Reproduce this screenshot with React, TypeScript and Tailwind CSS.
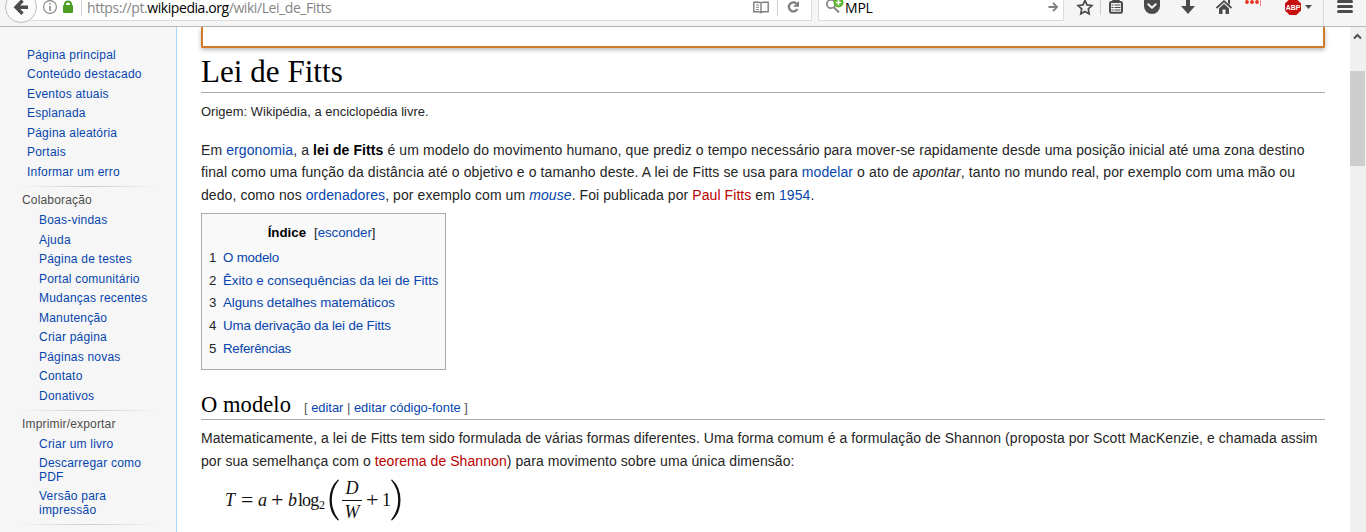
import type { ReactNode } from "react";

const ARIAL = "font-['Liberation_Sans',Arial,sans-serif]";
const SERIF = "font-['Liberation_Serif',Georgia,serif]";
const UI = "font-['Open_Sans','Segoe_UI',sans-serif]";

function A({ children, red }: { children: ReactNode; red?: boolean }) {
  return <a className={red ? "text-[#ba0000]" : "text-[#0645ad]"}>{children}</a>;
}

/** A slice of the toolbar drawing surface: x is its left edge, w its width. */
function Cell({ x, w, children }: { x: number; w: number; children?: ReactNode }) {
  return (
    <svg className="block shrink-0" width={w} height={26} viewBox={`${x} 0 ${w} 26`} fill="none">
      {children}
    </svg>
  );
}

function Toolbar() {
  return (
    <header className="flex h-[27px] w-full shrink-0 overflow-hidden border-b border-[#b9b9b9] bg-[#f5f5f5]">
      <Cell x={0} w={87}>
        <rect x="21" y="-2" width="70" height="22.500" fill="#fff" />
        <path d="M30 20.500H87" stroke="#dcdcdc" />
        <circle cx="21" cy="7" r="15.500" fill="#fbfbfb" stroke="#bcbcbc" />
        <path d="M28 7.200H17M22.500 0.500L16 7.200l6.500 6.500" stroke="#4b4b4b" strokeWidth="3.400" />
        <circle cx="50" cy="7" r="6.400" stroke="#858585" strokeWidth="1.100" />
        <path d="M50 6v5M50 3v1.600" stroke="#858585" strokeWidth="1.600" />
        <path d="M65 6V4.500a3 3 0 0 1 6 0V6" stroke="#4c9e24" strokeWidth="2" />
        <rect x="63" y="5" width="10" height="8" rx="1" fill="#4c9e24" />
        <path d="M81.500 0V16" stroke="#cfcfcf" />
      </Cell>
      <div className={`h-[21px] w-[653px] border-b border-[#dcdcdc] bg-white text-[14px] leading-[16px] whitespace-pre text-[#858585] ${UI}`}>
        <span className="tracking-[-0.43px]">https://pt.<span className="text-black">wikipedia.org</span>/wiki/Lei_de_Fitts</span>
      </div>
      <Cell x={740} w={90}>
        <rect x="740" y="-2" width="71.500" height="22.500" fill="#fff" stroke="none" />
        <path d="M740 20.500H811.500V0" stroke="#dcdcdc" />
        <path d="M818.500 0V20.500H830" fill="#fff" stroke="#dcdcdc" />
        <rect x="819" y="-1" width="11" height="21" fill="#fff" />
        <path d="M753.800 2.200h4.700q2.500 0 2.500 1.600q0-1.600 2.500-1.600h4.700v9.600h-4.700q-2.500 0-2.500 1.500q0-1.500-2.500-1.500h-4.700zM761 4v8" stroke="#7f7f7f" strokeWidth="1.400" />
        <path d="M756 5h3M756 7.300h3M756 9.500h3" stroke="#8a8a8a" />
        <path d="M777.500 0V16" stroke="#cfcfcf" />
        <path d="M797.400 9a4.500 4.500 0 1 1-1-5.400" stroke="#7f7f7f" strokeWidth="2.300" />
        <path d="M799 1v5.800h-6z" fill="#7f7f7f" />
        <circle cx="831" cy="4" r="4.200" stroke="#8a8a8a" strokeWidth="1.800" />
      </Cell>
      <Cell x={830} w={15}>
        <path d="M815 20.500H845" stroke="#dcdcdc" />
        <rect x="830" y="-1" width="15" height="21" fill="#fff" />
        <circle cx="831" cy="4" r="4.200" stroke="#8a8a8a" strokeWidth="1.800" />
        <path d="M833.800 7.200l5.200 5.400" stroke="#8a8a8a" strokeWidth="2.200" />
        <circle cx="838.500" cy="2.500" r="5" fill="#5cb531" />
        <path d="M835.800 2.500h5.400M838.500 0v5.200" stroke="#fff" strokeWidth="1.500" />
      </Cell>
      <div className={`h-[21px] w-[195px] border-b border-[#dcdcdc] bg-white text-[14px] leading-[16px] tracking-[-0.2px] text-black ${UI}`}>MPL</div>
      <Cell x={1040} w={30}>
        <path d="M1040 0V20.500H1063.500V0" fill="#fff" stroke="#dcdcdc" />
        <rect x="1039" y="-1" width="4" height="21" fill="#fff" />
        <path d="M1048.500 7h7M1053 2.800l4 4.200-4 4.200" stroke="#7f7f7f" strokeWidth="1.900" />
      </Cell>
      <Cell x={1070} w={30}>
        <path d="M1085 .4l2 4.500 4.900.6-3.600 3.400.9 4.900-4.200-2.400-4.200 2.400.9-4.900-3.600-3.400 4.900-.6z" stroke="#4b4b4b" strokeWidth="1.700" />
      </Cell>
      <Cell x={1100} w={34}>
        <path d="M1100.500 0V15" stroke="#cfcfcf" />
        <rect x="1110" y="2" width="12" height="10.800" rx="1.200" stroke="#4b4b4b" strokeWidth="2" />
        <path d="M1112 1.500q0-2.500 4-2.500t4 2.500z" fill="#4b4b4b" />
        <path d="M1111.500 5h2M1114.500 5h6M1111.500 7.500h2M1114.500 7.500h6M1111.500 10h2M1114.500 10h6" stroke="#4b4b4b" strokeWidth="1" />
      </Cell>
      <Cell x={1134} w={36}>
        <path d="M1144-1h16v7a8 8 0 0 1-16 0z" fill="#4b4b4b" />
        <path d="M1148.300 4.200l3.700 3.600 3.700-3.600" stroke="#f5f5f5" strokeWidth="2" strokeLinecap="round" strokeLinejoin="round" />
      </Cell>
      <Cell x={1170} w={36}>
        <path d="M1186-1h4v7h5l-7 8-7-8h5z" fill="#4b4b4b" />
      </Cell>
      <Cell x={1206} w={36}>
        <path d="M1216.500 8l7.500-6.800 7.500 6.800" stroke="#4b4b4b" strokeWidth="1.800" />
        <path d="M1228 0h2v5l-2-2zM1219 8.500l5-4.700 5 4.700V14h-3.500V9.500h-3V14h-3.500z" fill="#4b4b4b" />
      </Cell>
      <Cell x={1242} w={36}>
        <g fill="#e8301c">
          <circle cx="1247" cy="2" r="1.900" />
          <circle cx="1252" cy="2" r="1.900" />
          <circle cx="1257" cy="2" r="1.900" />
        </g>
        <path d="M1260.500 0V6" stroke="#e68a80" />
      </Cell>
      <Cell x={1278} w={54}>
        <path d="M1289.600-1h6.800l4.600 4.600v6.800l-4.600 4.600h-6.800l-4.600-4.600V3.600z" fill="#c70d0d" />
        <text x="1285.800" y="9.800" textLength="14.600" lengthAdjust="spacingAndGlyphs" fontFamily="Liberation Sans" fontSize="7.500" fontWeight="700" fill="#fff">ABP</text>
        <path d="M1305 5h7l-3.500 4z" fill="#4b4b4b" />
        <path d="M1323.500 0V26" stroke="#d8d8d8" />
      </Cell>
      <Cell x={1332} w={34}>
        <path d="M1338.500 1.500h13M1338.500 6.500h13M1338.500 11.500h13" stroke="#4b4b4b" strokeWidth="3" strokeLinecap="round" />
      </Cell>
    </header>
  );
}

const MAIN = ["Página principal", "Conteúdo destacado", "Eventos atuais", "Esplanada", "Página aleatória", "Portais", "Informar um erro"];
const COLLAB = ["Boas-vindas", "Ajuda", "Página de testes", "Portal comunitário", "Mudanças recentes", "Manutenção", "Criar página", "Páginas novas", "Contato", "Donativos"];
const PRINT = ["Criar um livro", "Descarregar como PDF", "Versão para impressão"];

function Links({ items, indent }: { items: string[]; indent?: boolean }) {
  return (
    <ul className={indent ? "w-[160px] pl-[39px]" : "pl-[27px]"}>
      {items.map((t) => (
        <li key={t} className="py-[3px] text-[12px] leading-[13.5px] tracking-[0.22px] text-[#0645ad]">{t}</li>
      ))}
    </ul>
  );
}

function Rule() {
  return <div className="ml-[19px] h-px w-[140px] bg-linear-to-r from-transparent via-[#c8ccd1] to-transparent" />;
}

function Heading({ children }: { children: string }) {
  return <h3 className="h-[23.500px] pl-[22px] pt-[5px] text-[12px] leading-[17px] tracking-[0.17px] text-[#4d4d4d]">{children}</h3>;
}

function Sidebar() {
  return (
    <nav className="h-full w-[177px] shrink-0 border-r border-[#a7d7f9] bg-[#f6f6f6] pt-[18.500px]">
      <Links items={MAIN} />
      <div className="h-[4px]" />
      <Rule />
      <Heading>Colaboração</Heading>
      <div className="h-[0.500px]" />
      <Links items={COLLAB} indent />
      <div className="h-[4px]" />
      <Rule />
      <Heading>Imprimir/exportar</Heading>
      <Links items={PRINT} indent />
      <div className="h-[4px]" />
      <Rule />
    </nav>
  );
}

const TOC = [
  { t: "O modelo", cls: "tracking-[-0.2px]" },
  { t: "Êxito e consequências da lei de Fitts", cls: "tracking-[-0.01px]" },
  { t: "Alguns detalhes matemáticos", cls: "tracking-[-0.07px]" },
  { t: "Uma derivação da lei de Fitts", cls: "tracking-[-0.15px]" },
  { t: "Referências", cls: "tracking-[-0.27px]" },
];

function Formula() {
  return (
    <div className={`ml-[23px] mt-[7px] flex h-[42px] items-center text-[18px] leading-[20px] text-[#111] ${SERIF}`}>
      <i className="w-[17px] pl-px">T</i>
      <span className="w-[17px] text-[22px]">=</span>
      <i className="w-[13px]">a</i>
      <span className="w-[17px] text-[22px]">+</span>
      <i className="w-[10px]">b</i>
      <span className="w-[21px] tracking-[-0.9px]">log</span>
      <span className="w-[10px] pt-[9px] text-[12px]">2</span>
      <svg className="block shrink-0" width="10" height="42" viewBox="0 0 10 42">
        <path d="M9 .5Q.500 8 .500 21T9 41.500L10 41Q2.800 32 2.800 21T10 1z" fill="#111" />
      </svg>
      <span className="ml-[3px] flex w-[20px] flex-col items-center">
        <i className="h-[20px] leading-[17px]">D</i>
        <span className="h-px w-full bg-[#111]" />
        <i className="h-[20px] leading-[23px]">W</i>
      </span>
      <span className="ml-[4px] w-[16px] text-[22px]">+</span>
      <span className="w-[9px]">1</span>
      <svg className="block shrink-0" width="10" height="42" viewBox="0 0 10 42">
        <path d="M1 .5Q9.500 8 9.500 21T1 41.500L0 41Q7.200 32 7.200 21T0 1z" fill="#111" />
      </svg>
    </div>
  );
}

function Article() {
  return (
    <main className="h-full w-[1173px] shrink-0 pl-[24px] text-[14px] leading-[22.4px] whitespace-nowrap text-[#252525]">
      <div className="h-[21px] w-[1124px] rounded-b-[2px] border-2 border-t-0 border-[#d17b29] shadow-[0_2px_4px_rgba(0,0,0,0.28)]" />
      <h1 className={`mt-[6px] h-[39px] w-[1124px] border-b border-[#aaa] text-[31px] leading-[36px] tracking-[0.05px] text-black ${SERIF}`}>Lei de Fitts</h1>
      <div className="mt-[8px] h-[22px] text-[12.900px] tracking-[0.05px]">Origem: Wikipédia, a enciclopédia livre.</div>
      <div className="mt-[16px]">
        <p className="tracking-[0.095px]">Em <A>ergonomia</A>, a <b className="text-black">lei de Fitts</b> é um modelo do movimento humano, que prediz o tempo necessário para mover-se rapidamente desde uma posição inicial até uma zona destino</p>
        <p className="tracking-[0.105px]">final como uma função da distância até o objetivo e o tamanho deste. A lei de Fitts se usa para <A>modelar</A> o ato de <i>apontar</i>, tanto no mundo real, por exemplo com uma mão ou</p>
        <p className="tracking-[0.078px]">dedo, como nos <A>ordenadores</A>, por exemplo com um <A><i>mouse</i></A>. Foi publicada por <A red>Paul Fitts</A> em <A>1954</A>.</p>
      </div>
      <section className="mt-[7px] h-[157px] w-[245px] border border-[#aaa] bg-[#f9f9f9] px-[7px] pt-[8px] text-[13.300px]">
        <div className="h-[24.500px] pr-[4px] text-center leading-[22px]">
          <b className="text-black">Índice</b><span className="ml-[8px] tracking-[-0.08px]">[<A>esconder</A>]</span>
        </div>
        <ol>
          {TOC.map(({ t, cls }, i) => (
            <li key={t} className="flex h-[22.700px] items-center">
              <span className="w-[14px] shrink-0">{i + 1}</span>
              <span className={cls}><A>{t}</A></span>
            </li>
          ))}
        </ol>
      </section>
      <h2 className="mt-[19px] flex h-[31px] w-[1124px] items-baseline border-b border-[#aaa]">
        <span className={`w-[90px] text-[22.500px] leading-[32px] tracking-[0.08px] text-black ${SERIF}`}>O modelo</span>
        <span className="ml-[13px] text-[12.900px] text-[#555]">[ <A>editar</A> | <A>editar código-fonte</A> ]</span>
      </h2>
      <p className="mt-[7px] tracking-[0.06px]">Matematicamente, a lei de Fitts tem sido formulada de várias formas diferentes. Uma forma comum é a formulação de Shannon (proposta por Scott MacKenzie, e chamada assim</p>
      <p className="tracking-[0.07px]">por sua semelhança com o <A red>teorema de Shannon</A>) para movimento sobre uma única dimensão:</p>
      <Formula />
    </main>
  );
}

function Scrollbar() {
  return (
    <div className="h-full w-[16px] shrink-0 bg-[#f0f0f0]">
      <svg className="block" width="15" height="44" viewBox="0 0 15 44" fill="none">
        <path d="M4 11.500l3.500-3.500 3.500 3.500" stroke="#505050" strokeWidth="2" />
      </svg>
      <div className="h-[95px] w-[15px] bg-[#cdcdcd]" />
    </div>
  );
}

export default function App() {
  return (
    <div className={`flex h-[532px] w-[1366px] flex-col overflow-hidden bg-white ${ARIAL}`}>
      <Toolbar />
      <div className="flex h-[505px]">
        <Sidebar />
        <Article />
        <Scrollbar />
      </div>
    </div>
  );
}
